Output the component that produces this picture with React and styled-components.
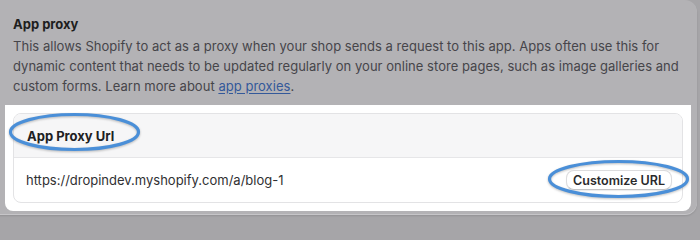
import React from "react";
import styled, { createGlobalStyle } from "styled-components";

const GlobalStyle = createGlobalStyle`
  html, body {
    margin: 0;
    padding: 0;
    background: #a6a5a8;
    font-family: Inter, "Noto Sans", "Liberation Sans", sans-serif;
  }
`;

const Page = styled.div`
  width: 700px;
  height: 227px;
  overflow: hidden;
`;

const Card = styled.div`
  width: 709px;
  height: 214px;
  margin-left: -12px;
  padding-left: 12px;
  box-sizing: border-box;
  background: #b3b2b5;
  border-radius: 0 12px 12px 12px;
  box-shadow: 0 1px 0 #c6c5c8, 0 2px 2px rgba(0, 0, 0, 0.12);
  display: flex;
  flex-direction: column;
`;

const Intro = styled.div`
  padding: 14px 0 0 13px;
`;

const Title = styled.h2`
  margin: 0;
  font-size: 13px;
  line-height: 20px;
  font-weight: 650;
  color: #1e1e20;
`;

const Text = styled.p`
  margin: 2px 0 0;
  font-size: 13px;
  line-height: 20px;
  color: #46454a;
  letter-spacing: 0.03px;
`;

const Link = styled.a`
  color: #34599a;
  text-decoration: underline;
  text-underline-offset: 2px;
`;

const Spotlight = styled.section`
  position: relative;
  margin: 9px 6px 0 5px;
  padding: 8px;
  background: #ffffff;
  border-radius: 0 0 8px 8px;
`;

const Box = styled.div`
  border: 1px solid #e3e3e5;
  border-radius: 8px;
  overflow: hidden;
`;

const BoxHeader = styled.div`
  height: 43px;
  display: flex;
  align-items: center;
  padding: 0 13px;
  background: #f6f6f7;
  border-bottom: 1px solid #e6e6e8;
  font-size: 13px;
  font-weight: 650;
  color: #202022;
`;

const BoxBody = styled.div`
  height: 44px;
  display: flex;
  align-items: center;
  justify-content: space-between;
  padding: 0 10px 0 12px;
  font-size: 13px;
  color: #303032;
`;

const Button = styled.button`
  height: 18px;
  padding: 0 6px;
  box-sizing: content-box;
  border: 1px solid #dcdcde;
  border-bottom-color: #c4c4c6;
  border-radius: 8px;
  background: #ffffff;
  box-shadow: 0 1px 1px rgba(0, 0, 0, 0.08);
  font-family: inherit;
  font-size: 12.5px;
  font-weight: 600;
  color: #2a2a2c;
  cursor: pointer;
`;

const Circle = styled.svg`
  position: absolute;
  left: ${(p) => p.$left}px;
  top: ${(p) => p.$top}px;
  overflow: visible;
  pointer-events: none;
`;

const Mark = ({ left, top, w, h }) => (
  <Circle $left={left} $top={top} width={w} height={h}>
    <ellipse
      cx={w / 2}
      cy={h / 2}
      rx={w / 2 - 1.5}
      ry={h / 2 - 1.5}
      fill="none"
      stroke="#4a8fd8"
      strokeWidth="3.2"
      style={{ filter: "drop-shadow(0 1px 1px rgba(0,0,0,0.25))" }}
    />
  </Circle>
);

export default function App() {
  return (
    <Page>
      <GlobalStyle />
      <Card>
        <Intro>
          <Title>App proxy</Title>
          <Text>
            This allows Shopify to act as a proxy when your shop sends a request to this app. Apps often use this for
            <br />
            dynamic content that needs to be updated regularly on your online store pages, such as image galleries and
            <br />
            custom forms. Learn more about <Link href="#">app proxies</Link>.
          </Text>
        </Intro>
        <Spotlight>
          <Box>
            <BoxHeader>App Proxy Url</BoxHeader>
            <BoxBody>
              <span>https://dropindev.myshopify.com/a/blog-1</span>
              <Button>Customize URL</Button>
            </BoxBody>
          </Box>
          <Mark left={4} top={8} w={131} h={38} />
          <Mark left={543} top={55} w={141} h={38} />
        </Spotlight>
      </Card>
    </Page>
  );
}
